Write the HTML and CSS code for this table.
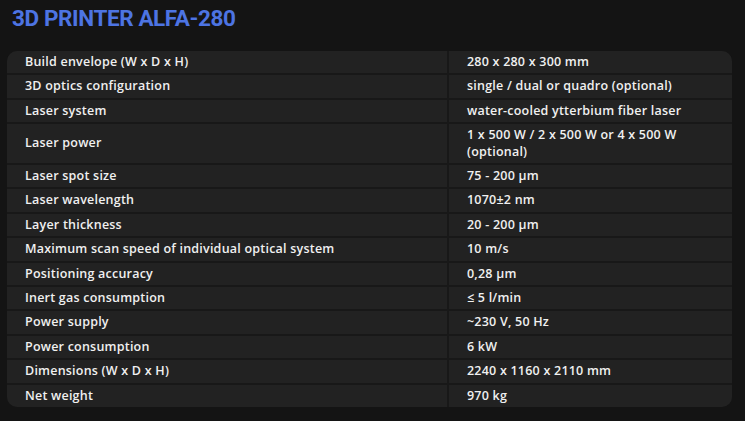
FILE: index.html
```html
<!DOCTYPE html>
<html>
<head>
<meta charset="utf-8">
<link rel="stylesheet" href="styles.css">
</head>
<body>
<h1 class="title">3D PRINTER ALFA-280</h1>
<div class="specs">
  <div class="cell">Build envelope (W x D x H)</div><div class="cell">280 x 280 x 300 mm</div>
  <div class="cell">3D optics configuration</div><div class="cell">single / dual or quadro (optional)</div>
  <div class="cell">Laser system</div><div class="cell">water-cooled ytterbium fiber laser</div>
  <div class="cell">Laser power</div><div class="cell">1 x 500 W / 2 x 500 W or 4 x 500 W (optional)</div>
  <div class="cell">Laser spot size</div><div class="cell">75 - 200 µm</div>
  <div class="cell">Laser wavelength</div><div class="cell">1070±2 nm</div>
  <div class="cell">Layer thickness</div><div class="cell">20 - 200 µm</div>
  <div class="cell">Maximum scan speed of individual optical system</div><div class="cell">10 m/s</div>
  <div class="cell">Positioning accuracy</div><div class="cell">0,28 µm</div>
  <div class="cell">Inert gas consumption</div><div class="cell">≤ 5 l/min</div>
  <div class="cell">Power supply</div><div class="cell">~230 V, 50 Hz</div>
  <div class="cell">Power consumption</div><div class="cell">6 kW</div>
  <div class="cell">Dimensions (W x D x H)</div><div class="cell">2240 x 1160 x 2110 mm</div>
  <div class="cell">Net weight</div><div class="cell">970 kg</div>
</div>
</body>
</html>
```

FILE: styles.css
```css
html, body {
  margin: 0;
  background: #141414;
}
body {
  padding: 6px 13px 0 7px;
  font-family: "Open Sans", "Noto Sans", sans-serif;
}
.title {
  margin: 0 0 0 5px;
  height: 45px;
  font-family: Roboto, "Noto Sans", sans-serif;
  font-weight: 700;
  font-size: 22.5px;
  line-height: 24px;
  color: #4d74e3;
  letter-spacing: -0.4px;
}
.specs {
  display: grid;
  grid-template-columns: 440px 1fr;
  gap: 2px;
  background: #181818;
  border-radius: 10px;
  overflow: hidden;
}
.cell {
  display: flex;
  align-items: center;
  background: #222222;
  color: #f0f0f0;
  font-size: 12.5px;
  font-weight: 600;
  line-height: 16.4px;
  letter-spacing: 0.22px;
  padding: 3px 18px;
}
```
